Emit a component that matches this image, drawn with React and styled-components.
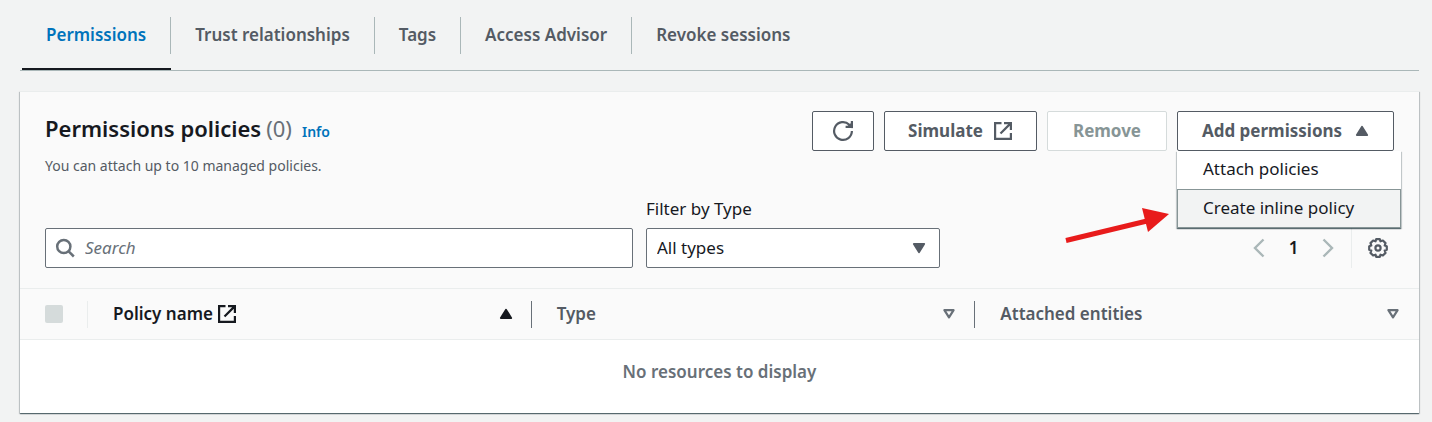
import React from "react";
import styled, { createGlobalStyle } from "styled-components";

const Global = createGlobalStyle`
  *, *::before, *::after { box-sizing: border-box; }
  body {
    margin: 0;
    background: #f2f3f3;
    color: #16191f;
    font-family: "Noto Sans", "Open Sans", sans-serif;
    font-size: 17px;
    line-height: 24px;
  }
  button, input, select { font: inherit; color: inherit; margin: 0; }
`;

const Page = styled.main`
  padding: 0 13px 8px 20px;
`;

const Tabs = styled.nav`
  display: flex;
  height: 71px;
  padding-left: 2px;
  border-bottom: 1px solid #aab7b8;
`;

const Tab = styled.a`
  display: flex;
  align-items: flex-start;
  padding-top: 17px;
  border-bottom: 2px solid ${(p) => (p.$active ? "#16191f" : "transparent")};
  color: ${(p) => (p.$active ? "#0073bb" : "#545b64")};
  font-weight: 600;
  text-decoration: none;
  white-space: nowrap;
`;

const TabLabel = styled.span`
  height: 37px;
  padding: 0 24px;
  line-height: 36px;
  border-right: 1px solid ${(p) => (p.$last ? "transparent" : "#aab7b8")};
`;

const Panel = styled.section`
  margin-top: 20px;
  background: #fff;
  border-top: 1px solid #eaeded;
  box-shadow: 0 1px 1px 0 rgba(0, 28, 36, 0.5), 1px 1px 1px 0 rgba(0, 28, 36, 0.15),
    -1px 1px 1px 0 rgba(0, 28, 36, 0.15);
`;

const PanelTop = styled.div`
  padding: 19px 25px 20px;
  background: #fafafa;
`;

const Heading = styled.header`
  display: flex;
  justify-content: space-between;
`;

const TitleRow = styled.div`
  display: flex;
  align-items: baseline;
  gap: 5px;
  height: 43px;
  line-height: 34px;
`;

const Title = styled.h2`
  margin: 0;
  font-size: 22px;
  font-weight: 600;
`;

const Count = styled.span`
  font-size: 22px;
  color: #687078;
`;

const InfoLink = styled.a`
  margin-left: 5px;
  font-size: 14px;
  font-weight: 600;
  color: #0073bb;
  text-decoration: none;
`;

const Description = styled.p`
  margin: 0;
  font-size: 14px;
  color: #545b64;
`;

const Actions = styled.div`
  display: flex;
  align-items: flex-start;
  gap: 10px;
`;

const Button = styled.button`
  display: flex;
  align-items: center;
  justify-content: center;
  gap: ${(p) => p.$gap || 10}px;
  min-width: ${(p) => p.$min}px;
  height: 40px;
  padding: 0;
  background: #fff;
  border: 1px solid ${(p) => (p.disabled ? "#d5dbdb" : "#545b64")};
  border-radius: 2px;
  color: ${(p) => (p.disabled ? "#879596" : "#545b64")};
  font-weight: 700;
  white-space: nowrap;
`;

const MenuAnchor = styled.div`
  position: relative;
`;

const Menu = styled.div`
  position: absolute;
  z-index: 1;
  top: 40px;
  left: 0;
  width: 224px;
  background: #fff;
  box-shadow: 0 1px 1px 0 rgba(0, 28, 36, 0.5), 1px 1px 1px 0 rgba(0, 28, 36, 0.15),
    -1px 1px 1px 0 rgba(0, 28, 36, 0.15);
`;

const MenuItem = styled.button`
  display: block;
  width: 100%;
  height: ${(p) => (p.$active ? "39px" : "38px")};
  padding: 0 25px 2px;
  border: 1px solid ${(p) => (p.$active ? "#879596" : "transparent")};
  background: ${(p) => (p.$active ? "#f2f3f3" : "#fff")};
  text-align: left;
  white-space: nowrap;
`;

const Pointer = styled.svg`
  position: absolute;
  right: 100%;
  top: 95px;
  margin-right: 6px;
`;

const Toolbar = styled.div`
  display: grid;
  grid-template-columns: 4fr 2fr 3fr;
  gap: 13px;
  align-items: end;
  margin-top: 19px;
`;

const SearchBox = styled.label`
  display: flex;
  align-items: center;
  gap: 10px;
  height: 40px;
  padding: 0 10px 0 9px;
  background: #fff;
  border: 1px solid #687078;
  border-radius: 2px;
  color: #687078;
`;

const SearchInput = styled.input`
  flex: 1;
  min-width: 0;
  padding: 0;
  border: 0;
  outline: 0;
  background: none;
  color: #16191f;
  &::placeholder {
    color: #687078;
    font-style: italic;
    opacity: 1;
  }
`;

const Field = styled.div`
  display: flex;
  flex-direction: column;
  gap: 7px;
`;

const SelectWrap = styled.div`
  position: relative;
  color: #545b64;
  svg {
    position: absolute;
    right: 14px;
    top: 14px;
    pointer-events: none;
  }
`;

const Select = styled.select`
  display: block;
  width: 100%;
  height: 40px;
  padding: 0 10px;
  appearance: none;
  background: #fff;
  border: 1px solid #687078;
  border-radius: 2px;
  color: #16191f;
`;

const Pagination = styled.div`
  display: flex;
  align-items: center;
  justify-content: flex-end;
  height: 40px;
`;

const IconButton = styled.button`
  display: flex;
  padding: 0;
  border: 0;
  background: none;
  color: ${(p) => (p.disabled ? "#aab7b8" : "#545b64")};
`;

const PageNumber = styled.span`
  width: 57px;
  text-align: center;
  font-weight: 600;
`;

const Settings = styled.div`
  display: flex;
  align-items: center;
  height: 40px;
  margin-left: 17px;
  padding: 0 6px 0 16px;
  border-left: 1px solid #eaeded;
`;

const Table = styled.table`
  width: 100%;
  table-layout: fixed;
  border-collapse: collapse;
`;

const HeadCell = styled.th`
  width: ${(p) => (p.$narrow ? "68px" : "auto")};
  height: 51px;
  padding: 0;
  background: #fafafa;
  border-top: 1px solid #eaeded;
  border-bottom: 1px solid #eaeded;
  color: ${(p) => (p.$sorted ? "#16191f" : "#545b64")};
  font-weight: 600;
  text-align: left;
`;

const HeadContent = styled.div`
  display: flex;
  align-items: center;
  gap: 4px;
  height: 27px;
  padding: 0 18px 0 25px;
  border-right: 1px solid ${(p) => p.$line || "transparent"};
`;

const SortIcon = styled.span`
  display: flex;
  margin-left: auto;
  color: ${(p) => (p.$sorted ? "#16191f" : "#687078")};
`;

const Checkbox = styled.input`
  flex: none;
  appearance: none;
  width: 18px;
  height: 18px;
  border-radius: 2px;
  background: #d5dbdb;
`;

const EmptyCell = styled.td`
  height: 73px;
  padding: 0 0 8px;
  color: #687078;
  font-weight: 600;
  text-align: center;
`;

const ExternalIcon = () => (
  <svg width="20" height="20" viewBox="0 0 20 20" fill="none" stroke="currentColor" strokeWidth="2.2" aria-hidden="true">
    <path d="M8.5 2.1H2.1V17.9H17.9V12" />
    <path d="M11 2.1H17.9V9M17.6 2.4L7.5 12.5" />
  </svg>
);

const RefreshIcon = () => (
  <svg width="22" height="22" viewBox="0 0 22 22" fill="none" stroke="currentColor" strokeWidth="2.2" aria-hidden="true">
    <path d="M19.9 11A8.9 8.9 0 1 1 17.3 4.7L19.4 6.8" />
    <path d="M19.9 1V6.9H13.6" />
    <path d="M16.5 6.5L19.5 4V6.9Z" fill="currentColor" />
  </svg>
);

const SearchIcon = () => (
  <svg width="20" height="20" viewBox="0 0 20 20" fill="none" stroke="currentColor" strokeWidth="2.5" aria-hidden="true">
    <circle cx="8.8" cy="8.5" r="6.6" />
    <path d="M13.4 13.1L18.8 18.5" />
  </svg>
);

const Caret = ({ up, hollow }) => (
  <svg width="14" height="12" viewBox="0 0 14 12" aria-hidden="true">
    <path
      d={up ? "M7 2L12 10H2Z" : hollow ? "M7 9.4L11.6 2.2H2.4Z" : "M7 10L12 2H2Z"}
      fill={hollow ? "none" : "currentColor"}
      stroke="currentColor"
      strokeWidth="2.2"
      strokeLinejoin="round"
    />
  </svg>
);

const Chevron = ({ right }) => (
  <svg width="12" height="20" viewBox="0 0 12 20" fill="none" stroke="currentColor" strokeWidth="2.4" aria-hidden="true">
    <path d={right ? "M1.5 1.5L10 10L1.5 18.5" : "M10.5 1.5L2 10L10.5 18.5"} />
  </svg>
);

const GearIcon = () => (
  <svg width="20" height="20" viewBox="0 0 20 20" fill="none" stroke="currentColor" strokeWidth="2.2" strokeLinejoin="round" aria-hidden="true">
    <path d="M8.2 1.2H11.8L12.5 3.3L14.9 2.5L17.5 5.1L16.7 7.5L18.8 8.2V11.8L16.7 12.5L17.5 14.9L14.9 17.5L12.5 16.7L11.8 18.8H8.2L7.5 16.7L5.1 17.5L2.5 14.9L3.3 12.5L1.2 11.8V8.2L3.3 7.5L2.5 5.1L5.1 2.5L7.5 3.3Z" />
    <circle cx="10" cy="10" r="2.6" />
  </svg>
);

const tabs = ["Permissions", "Trust relationships", "Tags", "Access Advisor", "Revoke sessions"];

export default function App() {
  return (
    <>
      <Global />
      <Page>
        <Tabs>
          {tabs.map((name, i) => (
            <Tab key={name} href="#" $active={i === 0}>
              <TabLabel $last={i === tabs.length - 1}>{name}</TabLabel>
            </Tab>
          ))}
        </Tabs>

        <Panel>
          <PanelTop>
            <Heading>
              <div>
                <TitleRow>
                  <Title>Permissions policies</Title>
                  <Count>(0)</Count>
                  <InfoLink href="#">Info</InfoLink>
                </TitleRow>
                <Description>You can attach up to 10 managed policies.</Description>
              </div>
              <Actions>
                <Button $min={62} aria-label="Refresh"><RefreshIcon /></Button>
                <Button $min={153}>Simulate <ExternalIcon /></Button>
                <Button $min={120} disabled>Remove</Button>
                <MenuAnchor>
                  <Button $min={217} $gap={13} aria-haspopup="menu" aria-expanded="true">
                    Add permissions <Caret up />
                  </Button>
                  <Menu role="menu">
                    <MenuItem role="menuitem">Attach policies</MenuItem>
                    <MenuItem role="menuitem" $active>Create inline policy</MenuItem>
                  </Menu>
                  <Pointer width="106" height="38" viewBox="0 0 106 38" aria-hidden="true">
                    <path d="M1 34.5L82 15" stroke="#e81b1b" strokeWidth="5" />
                    <path d="M77 2L104 8L83 26Z" fill="#e81b1b" />
                  </Pointer>
                </MenuAnchor>
              </Actions>
            </Heading>

            <Toolbar>
              <SearchBox>
                <SearchIcon />
                <SearchInput type="text" placeholder="Search" aria-label="Search" />
              </SearchBox>
              <Field>
                <label htmlFor="type-filter">Filter by Type</label>
                <SelectWrap>
                  <Select id="type-filter" defaultValue="all">
                    <option value="all">All types</option>
                  </Select>
                  <Caret />
                </SelectWrap>
              </Field>
              <Pagination>
                <IconButton disabled aria-label="Previous page"><Chevron /></IconButton>
                <PageNumber>1</PageNumber>
                <IconButton disabled aria-label="Next page"><Chevron right /></IconButton>
                <Settings>
                  <IconButton aria-label="Preferences"><GearIcon /></IconButton>
                </Settings>
              </Pagination>
            </Toolbar>
          </PanelTop>

          <Table>
            <thead>
              <tr>
                <HeadCell $narrow>
                  <HeadContent $line="#eaeded">
                    <Checkbox type="checkbox" disabled aria-label="Select all policies" />
                  </HeadContent>
                </HeadCell>
                <HeadCell $sorted>
                  <HeadContent $line="#687078">
                    Policy name <ExternalIcon />
                    <SortIcon $sorted><Caret up /></SortIcon>
                  </HeadContent>
                </HeadCell>
                <HeadCell>
                  <HeadContent $line="#687078">
                    Type
                    <SortIcon><Caret hollow /></SortIcon>
                  </HeadContent>
                </HeadCell>
                <HeadCell>
                  <HeadContent>
                    Attached entities
                    <SortIcon><Caret hollow /></SortIcon>
                  </HeadContent>
                </HeadCell>
              </tr>
            </thead>
            <tbody>
              <tr>
                <EmptyCell colSpan={4}>No resources to display</EmptyCell>
              </tr>
            </tbody>
          </Table>
        </Panel>
      </Page>
    </>
  );
}
